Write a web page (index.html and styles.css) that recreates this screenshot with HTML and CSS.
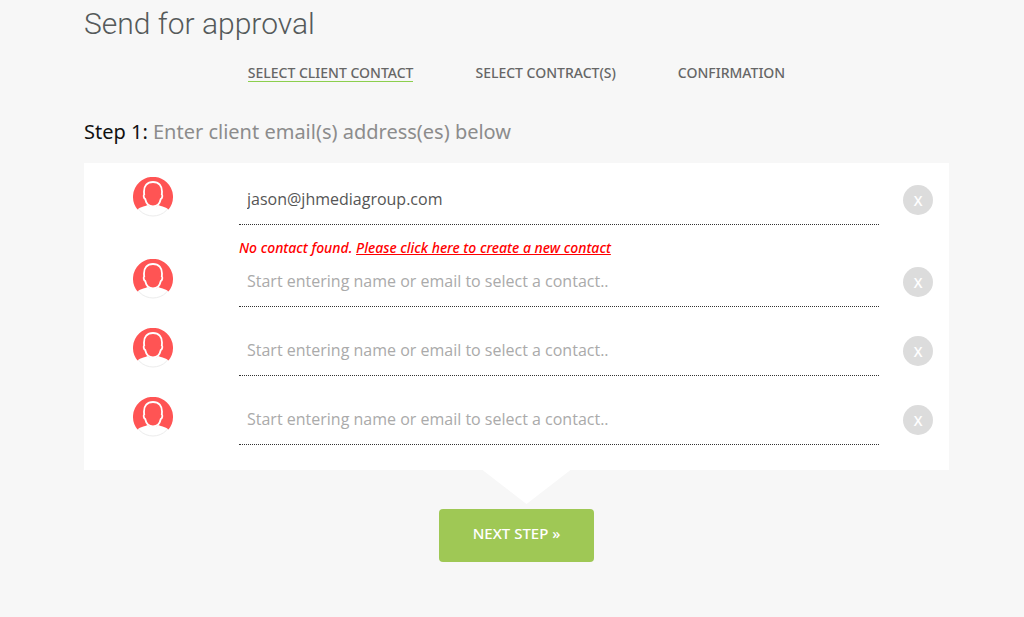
FILE: index.html
```html
<!DOCTYPE html>
<html lang="en">
    <head>
        <meta charset="utf-8">
        <meta name="viewport" content="width=device-width, initial-scale=1">
        <title>Send for approval</title>
        <link rel="stylesheet" href="styles.css">
    </head>
    <body>
        <svg class="sprite" aria-hidden="true">
            <symbol id="avatar" viewBox="0 0 40 40">
                <circle cx="20" cy="20" r="19" fill="#fff" stroke="#ececec"/>
                <path d="M4.500 32.500a20 20 0 1 1 31 0c-3-3-7.500-3-10-4.500-2 2.500-9 2.500-11 0-2.500 1.500-7 1.500-10 4.500z" fill="#ff5454"/>
                <path d="M20 5c-6 0-9 4-9 9.500 0 1.200.1 2 .2 3-1 .5-.5 4 1 4.500 1 4.500 3.800 7.500 7.800 7.500s6.800-3 7.800-7.500c1.500-.5 2-4 1-4.500.1-1 .2-1.800.2-3C29 9 26 5 20 5z" fill="#ff5454" stroke="#fff" stroke-width="1.800"/>
            </symbol>
        </svg>
        <main class="page">
            <h1>Send for approval</h1>
            <nav class="steps">
                <a class="active" href="#contact">SELECT CLIENT CONTACT</a>
                <a href="#contracts">SELECT CONTRACT(S)</a>
                <a href="#confirmation">CONFIRMATION</a>
            </nav>
            <h2><span>Step 1:</span> Enter client email(s) address(es) below</h2>
            <form>
                <div class="contacts">
                    <div class="row">
                        <label for="contact1" aria-label="Contact 1"><svg class="avatar"><use href="#avatar"/></svg></label>
                        <input type="text" id="contact1" value="jason@jhmediagroup.com">
                        <button class="remove" type="button">X</button>
                    </div>
                    <p class="error">No contact found. <a href="#new">Please click here to create a new contact</a></p>
                    <div class="row">
                        <label for="contact2" aria-label="Contact 2"><svg class="avatar"><use href="#avatar"/></svg></label>
                        <input type="text" id="contact2" placeholder="Start entering name or email to select a contact..">
                        <button class="remove" type="button">X</button>
                    </div>
                    <div class="row">
                        <label for="contact3" aria-label="Contact 3"><svg class="avatar"><use href="#avatar"/></svg></label>
                        <input type="text" id="contact3" placeholder="Start entering name or email to select a contact..">
                        <button class="remove" type="button">X</button>
                    </div>
                    <div class="row">
                        <label for="contact4" aria-label="Contact 4"><svg class="avatar"><use href="#avatar"/></svg></label>
                        <input type="text" id="contact4" placeholder="Start entering name or email to select a contact..">
                        <button class="remove" type="button">X</button>
                    </div>
                </div>
                <div class="arrow"></div>
                <button class="next" type="submit">NEXT STEP »</button>
            </form>
        </main>
    </body>
</html>
```
FILE: styles.css
```css
*{
    box-sizing: border-box;
}
body{
    margin: 0;
    background: #f7f7f7;
    color: #666;
    font-family: "Open Sans", sans-serif;
}
.sprite{
    display: none;
}
.page{
    padding: 4px 75px 40px 84px;
}
h1{
    margin: 0;
    color: #555a5a;
    font-family: Roboto, sans-serif;
    font-size: 30px;
    font-weight: 300;
    line-height: 40px;
}
.steps{
    display: flex;
    justify-content: center;
    gap: 62px;
    margin-top: 20px;
}
.steps a{
    border-bottom: 1px solid transparent;
    color: #666;
    font-family: "Noto Sans", sans-serif;
    font-size: 14px;
    font-weight: 500;
    line-height: 17px;
    text-decoration: none;
}
.steps .active{
    border-bottom-color: #8ccf4d;
}
h2{
    margin: 36px 0 17px;
    color: #8c8c8c;
    font-family: "Noto Sans", sans-serif;
    font-size: 20px;
    font-weight: 400;
    line-height: 28px;
}
h2 span{
    color: #111;
}
form{
    display: flex;
    flex-direction: column;
    align-items: center;
}
.contacts{
    width: 100%;
    padding: 14px 16px 4px 49px;
    background: #fff;
}
.row{
    display: grid;
    grid-template-columns: 82px 1fr 30px;
    column-gap: 24px;
    height: 48px;
    margin-bottom: 21px;
}
.avatar{
    display: block;
    width: 40px;
    height: 40px;
}
.row input{
    min-width: 0;
    padding: 0 8px 3px;
    border: 0;
    border-bottom: 1px dotted #333;
    background: none;
    color: #555;
    font: 16px "Open Sans", sans-serif;
    outline: none;
}
.row input::placeholder{
    color: #aaa;
    opacity: 1;
}
.remove{
    width: 30px;
    height: 30px;
    margin-top: 8px;
    padding: 0;
    border: 0;
    border-radius: 50%;
    background: #dcdcdc;
    color: #fff;
    font: 600 14px "Open Sans", sans-serif;
    cursor: pointer;
}
.error{
    margin: -8px 0 1px 106px;
    color: #f00;
    font-family: "Noto Sans", sans-serif;
    font-size: 14px;
    font-style: italic;
    font-weight: 500;
    line-height: 20px;
}
.error a{
    color: #f00;
}
.arrow{
    width: 88px;
    height: 34px;
    margin-left: 20px;
    background: #fff;
    clip-path: polygon(0 0, 100% 0, 50% 100%);
}
.next{
    width: 155px;
    height: 53px;
    margin-top: 5px;
    padding: 0 0 5px;
    border: 0;
    border-radius: 4px;
    background: #9fc855;
    color: #fff;
    font: 500 15px "Noto Sans", sans-serif;
    cursor: pointer;
}
```
